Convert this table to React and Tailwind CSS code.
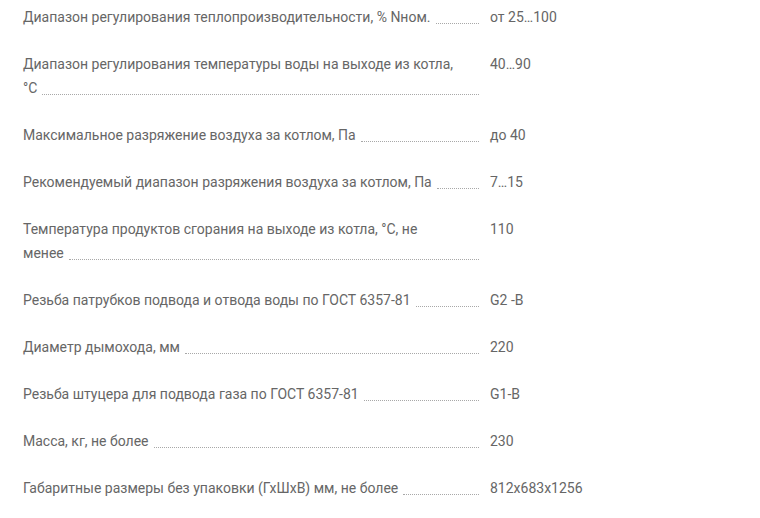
const specs = [
  { label: ['Диапазон регулирования теплопроизводительности, % Nном.'], value: 'от 25…100' },
  { label: ['Диапазон регулирования температуры воды на выходе из котла,', '°C'], value: '40…90' },
  { label: ['Максимальное разряжение воздуха за котлом, Па'], value: 'до 40' },
  { label: ['Рекомендуемый диапазон разряжения воздуха за котлом, Па'], value: '7…15' },
  { label: ['Температура продуктов сгорания на выходе из котла, °C, не', 'менее'], value: '110' },
  { label: ['Резьба патрубков подвода и отвода воды по ГОСТ 6357-81'], value: 'G2 -B' },
  { label: ['Диаметр дымохода, мм'], value: '220' },
  { label: ['Резьба штуцера для подвода газа по ГОСТ 6357-81'], value: 'G1-B' },
  { label: ['Масса, кг, не более'], value: '230' },
  { label: ['Габаритные размеры без упаковки (ГхШхВ) мм, не более'], value: '812x683x1256' },
];

const SpecRow = ({ label, value }) => {
  const first = label.slice(0, -1);
  const last = label[label.length - 1];

  return (
    <div className="flex items-start gap-[11px]">
      <div className="w-[456px] shrink-0">
        {first.map((line) => (
          <div key={line} className="whitespace-nowrap">{line}</div>
        ))}
        <div className="flex items-start gap-[5px]">
          <span className="whitespace-nowrap">{last}</span>
          {/* dotted leader */}
          <div className="flex-1 h-[19px] border-b border-dotted border-[#a8a8a8]" />
        </div>
      </div>
      <div className="whitespace-nowrap">{value}</div>
    </div>
  );
};

const App = () => {
  return (
    <div
      className="min-h-[518px] w-[760px] bg-white pt-[5px] pl-[23px] text-[14px] leading-[24px] text-[#666]"
      style={{ fontFamily: 'Roboto, "Liberation Sans", sans-serif' }}
    >
      <div className="flex flex-col gap-[23px]">
        {specs.map((s) => (
          <SpecRow key={s.value} label={s.label} value={s.value} />
        ))}
      </div>
    </div>
  );
};

export default App;
